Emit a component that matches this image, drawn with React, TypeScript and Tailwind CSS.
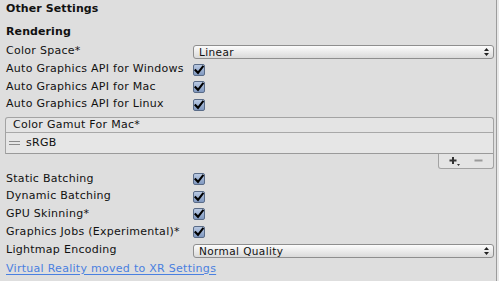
import React from 'react';

const Checkbox: React.FC = () => (
  <div className="w-[12px] h-[12px] rounded-[2px] border border-[#5a6c88] bg-gradient-to-b from-[#b9c9e2] to-[#8199c0] flex items-center justify-center">
    <svg width="10" height="10" viewBox="0 0 10 10">
      <path d="M1.5 5.2 L4 7.8 L8.8 1.6" fill="none" stroke="#000" strokeWidth="2.1" strokeLinecap="square" />
    </svg>
  </div>
);

const Dropdown: React.FC<{ value: string }> = ({ value }) => (
  <div className="flex-1 h-[14px] rounded-[3px] border border-[#8e8e8e] bg-gradient-to-b from-[#fcfcfc] to-[#dadada] flex items-center justify-between pl-[5px] pr-[4px]">
    <span className="leading-[12px] text-[10.5px] tracking-[0.4px]">{value}</span>
    <svg width="5" height="8" viewBox="0 0 5 8">
      <path d="M2.5 0 L5 3 L0 3 Z M2.5 8 L5 5 L0 5 Z" fill="#222" />
    </svg>
  </div>
);

const Row: React.FC<{ label: string; h: string; children?: React.ReactNode }> = ({ label, h, children }) => (
  <div className={`flex items-center ${h}`}>
    <div className="w-[187px] shrink-0 whitespace-nowrap">{label}</div>
    {children}
  </div>
);

export default function App() {
  return (
    <div className="w-[499px] h-[281px] bg-[#dedede] flex overflow-hidden text-[11px] tracking-[0.28px] text-[#111] font-['DejaVu_Sans',sans-serif]">
      <div className="flex-1 flex flex-col pl-[6px] pr-[2px]">
        <div className="h-[18px] flex items-center font-bold tracking-[0.1px]">Other Settings</div>
        <div className="h-[5px]" />
        <div className="h-[19px] flex items-center font-bold tracking-[0.1px]">Rendering</div>
        <Row label="Color Space*" h="h-[19px]">
          <Dropdown value="Linear" />
        </Row>
        <Row label="Auto Graphics API for Windows" h="h-[17px]">
          <Checkbox />
        </Row>
        <Row label="Auto Graphics API for Mac" h="h-[18px]">
          <Checkbox />
        </Row>
        <Row label="Auto Graphics API for Linux" h="h-[17px]">
          <Checkbox />
        </Row>

        <div className="mt-[4px] -ml-[1px]">
          <div className="border-x border-t border-[#a3a3a3] rounded-t-[3px] bg-[#e4e4e4]">
            <div className="h-[15px] flex items-center pl-[7px] border-b border-[#a8a8a8]">Color Gamut For Mac*</div>
            <div className="h-[21px] flex items-center bg-[#e6e6e6] border-b border-[#9a9a9a]">
              <div className="w-[20px] flex flex-col gap-[2px] pl-[3px] pr-[6px]">
                <div className="h-[1px] bg-[#8a8a8a]" />
                <div className="h-[1px] bg-[#8a8a8a]" />
              </div>
              <span>sRGB</span>
            </div>
          </div>
          <div className="flex justify-end">
            <div className="w-[56px] h-[15px] border-x border-b border-[#a3a3a3] rounded-b-[3px] bg-[#e4e4e4] flex items-center justify-around px-[4px]">
              <svg width="12" height="10" viewBox="0 0 12 10">
                <path d="M4 1 V8 M0.5 4.5 H7.5" stroke="#333" strokeWidth="2" />
                <path d="M8 8 L11 8 L9.5 10 Z" fill="#333" />
              </svg>
              <svg width="9" height="10" viewBox="0 0 9 10">
                <path d="M0.5 4.5 H8.5" stroke="#9a9a9a" strokeWidth="2" />
              </svg>
            </div>
          </div>
        </div>

        <div className="h-[1px]" />
        <Row label="Static Batching" h="h-[18px]">
          <Checkbox />
        </Row>
        <Row label="Dynamic Batching" h="h-[17px]">
          <Checkbox />
        </Row>
        <Row label="GPU Skinning*" h="h-[18px]">
          <Checkbox />
        </Row>
        <Row label="Graphics Jobs (Experimental)*" h="h-[18px]">
          <Checkbox />
        </Row>
        <Row label="Lightmap Encoding" h="h-[19px]">
          <Dropdown value="Normal Quality" />
        </Row>
        <div className="h-[18px] flex items-center">
          <span className="text-[#4a80e0] underline underline-offset-[2px] decoration-[#4a80e0]">Virtual Reality moved to XR Settings</span>
        </div>
      </div>
      <div className="w-[1px] bg-[#9c9c9c]" />
      <div className="w-[2px] bg-[#e8e8e8]" />
    </div>
  );
}
